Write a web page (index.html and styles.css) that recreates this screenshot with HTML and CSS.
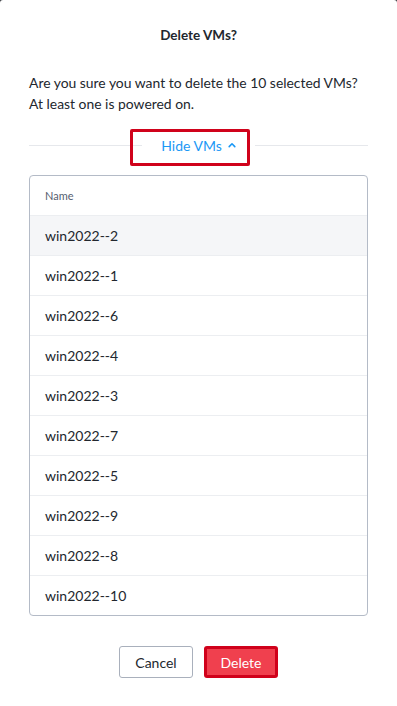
FILE: index.html
```html
<!DOCTYPE html>
<html>
<head>
<meta charset="utf-8">
<link rel="stylesheet" href="styles.css">
</head>
<body>
<div class="modal">
  <h1 class="title">Delete VMs?</h1>
  <p class="message">Are you sure you want to delete the 10 selected VMs?<br>At least one is powered on.</p>
  <div class="divider">
    <span class="line"></span>
    <button class="toggle">Hide VMs <svg class="chev" width="8" height="6" viewBox="0 0 8 6"><path d="M1.2 4.6 L4 1.8 L6.8 4.6" fill="none" stroke="#1b98f5" stroke-width="1.6" stroke-linecap="round" stroke-linejoin="round"/></svg></button>
    <span class="line"></span>
  </div>
  <div class="table">
    <div class="thead">Name</div>
    <div class="row hover">win2022--2</div>
    <div class="row">win2022--1</div>
    <div class="row">win2022--6</div>
    <div class="row">win2022--4</div>
    <div class="row">win2022--3</div>
    <div class="row">win2022--7</div>
    <div class="row">win2022--5</div>
    <div class="row">win2022--9</div>
    <div class="row">win2022--8</div>
    <div class="row">win2022--10</div>
  </div>
  <div class="actions">
    <button class="btn cancel">Cancel</button>
    <button class="btn delete">Delete</button>
  </div>
</div>
</body>
</html>
```
FILE: styles.css
```css
html, body {
  margin: 0;
  padding: 0;
  background: #3a3d42;
}
body {
  font-family: "Lato", "Open Sans", sans-serif;
  color: #22272e;
}
.modal {
  background: #fff;
  height: 706px;
  border-radius: 3px 3px 0 0;
  padding: 0 29px;
  box-sizing: border-box;
}
.title {
  margin: 0;
  padding-top: 26px;
  font-size: 13.5px;
  font-weight: 700;
  line-height: 18px;
  text-align: center;
}
.message {
  margin: 28px 0 0;
  font-size: 13.9px;
  line-height: 21px;
}
.divider {
  display: flex;
  align-items: center;
  margin-top: 13px;
  height: 37px;
}
.line {
  flex: 1;
  height: 1px;
  background: #e6e8ec;
}
.toggle {
  position: relative;
  width: 113px;
  height: 37px;
  border: 0;
  background: #fff;
  padding: 0;
  font-family: inherit;
  font-size: 14px;
  color: #1b98f5;
  display: flex;
  align-items: center;
  justify-content: center;
  gap: 6px;
}
.toggle::after {
  content: "";
  position: absolute;
  left: -12px;
  top: 2px;
  width: 120px;
  height: 37px;
  box-sizing: border-box;
  border: 3px solid #d0021b;
  border-radius: 2px;
}
.chev {
  display: block;
  margin-top: -1px;
}
.table {
  margin-top: 11px;
  border: 1px solid #b4bbc7;
  border-radius: 4px;
  overflow: hidden;
}
.thead {
  height: 39px;
  display: flex;
  align-items: center;
  padding-left: 15px;
  font-size: 11px;
  color: #56606f;
}
.row {
  height: 39px;
  border-top: 1px solid #eceef1;
  display: flex;
  align-items: center;
  padding-left: 15px;
  font-size: 14px;
  color: #22272e;
}
.row.hover {
  background: #f5f6f8;
}
.actions {
  display: flex;
  justify-content: center;
  gap: 11px;
  margin-top: 30px;
}
.btn {
  width: 74px;
  height: 32px;
  font-family: inherit;
  font-size: 14px;
  border-radius: 3px;
  box-sizing: border-box;
  padding: 0;
}
.cancel {
  background: #fff;
  border: 1px solid #a9b0bc;
  color: #22272e;
}
.delete {
  background: #f0404e;
  border: 3px solid #d0011b;
  color: #fff;
}
```
